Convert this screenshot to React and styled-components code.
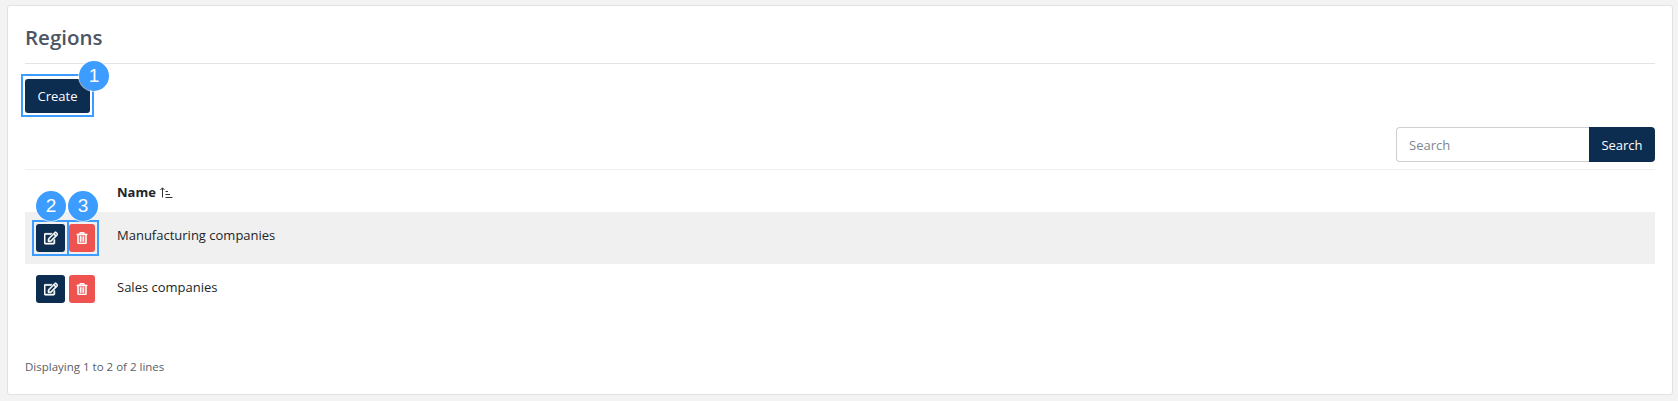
import React from "react";
import styled, { createGlobalStyle } from "styled-components";
import { FaRegEdit, FaRegTrashAlt } from "react-icons/fa";

const rows = [
    { name: "Manufacturing companies", annotated: true },
    { name: "Sales companies", annotated: false },
];

// small sort arrow next to the column name
const SortIcon = () => (
    <svg width="13" height="11" viewBox="0 0 13 11" fill="none" stroke="#333" strokeWidth="1">
        <path d="M2.5 10.5V1M0.5 3L2.5 0.8L4.5 3" />
        <path d="M5.5 4.5H8M5.5 7.5H10M5.5 10.5H12.5" />
    </svg>
);

function App() {
    return (
        <Page>
            <GlobalStyle />
            <Card>
                <Title>Regions</Title>
                <Toolbar>
                    <Annotated>
                        <Button>Create</Button>
                        <Outline $inset="-5px -4px -4px -4px" />
                        <Badge $left="54px" $top="-18px">1</Badge>
                    </Annotated>
                </Toolbar>
                <SearchRow>
                    <SearchInput placeholder="Search" />
                    <SearchButton>Search</SearchButton>
                </SearchRow>
                <Table>
                    <HeaderRow>
                        <NameHeader>
                            Name <SortIcon />
                        </NameHeader>
                    </HeaderRow>
                    {rows.map((row) => (
                        <Row key={row.name} $striped={row.annotated}>
                            <Actions $top={row.annotated ? 12 : 11}>
                                <Annotated>
                                    <EditButton><FaRegEdit size={14} /></EditButton>
                                    {row.annotated && <Outline $inset="-4px -4px -4px -4px" />}
                                    {row.annotated && <Badge $left="0" $top="-33px">2</Badge>}
                                </Annotated>
                                <Annotated>
                                    <DeleteButton><FaRegTrashAlt size={12} /></DeleteButton>
                                    {row.annotated && <Outline $inset="-4px -4px -4px -2px" />}
                                    {row.annotated && <Badge $left="-1px" $top="-33px">3</Badge>}
                                </Annotated>
                            </Actions>
                            <NameCell>{row.name}</NameCell>
                        </Row>
                    ))}
                </Table>
                <Footer>Displaying 1 to 2 of 2 lines</Footer>
            </Card>
        </Page>
    );
}

export default App;

const GlobalStyle = createGlobalStyle`
    html, body {
        margin: 0;
        background: #f3f3f3;
    }
    * {
        box-sizing: border-box;
    }
`;

const Page = styled.div`
    height: 401px;
    padding: 5px 5px 6px 7px;
    font-family: "Open Sans", "Liberation Sans", sans-serif;
`;

const Card = styled.div`
    height: 390px;
    padding: 0 17px;
    background: #fff;
    border: 1px solid #e2e2e2;
    border-radius: 3px;
`;

const Title = styled.h1`
    height: 58px;
    margin: 0;
    padding-top: 17px;
    color: #4b5563;
    font-size: 20.5px;
    font-weight: 600;
    line-height: 28px;
    border-bottom: 1px solid #e3e3e3;
`;

const Toolbar = styled.div`
    display: flex;
    padding-top: 15px;
`;

const Annotated = styled.div`
    position: relative;
    display: flex;
`;

const Outline = styled.div`
    position: absolute;
    inset: ${(p) => p.$inset};
    border: 2px solid #3c9cff;
    pointer-events: none;
`;

const Badge = styled.div`
    position: absolute;
    left: ${(p) => p.$left};
    top: ${(p) => p.$top};
    z-index: 1;
    width: 30px;
    height: 30px;
    display: flex;
    align-items: center;
    justify-content: center;
    color: #fff;
    background: #3c9cff;
    border-radius: 50%;
    box-shadow: 0 0 0 1px rgba(255, 255, 255, 0.6);
    font-family: "Liberation Sans", sans-serif;
    font-size: 19px;
`;

const Button = styled.button`
    width: 65px;
    height: 34px;
    padding: 0;
    color: #fff;
    background: #0c2d4f;
    border: 0;
    border-radius: 3px;
    font-family: inherit;
    font-size: 13px;
`;

const SearchRow = styled.div`
    display: flex;
    justify-content: flex-end;
    margin-top: 14px;
`;

const SearchInput = styled.input`
    width: 193px;
    height: 35px;
    padding: 0 12px;
    color: #333;
    border: 1px solid #cfcfcf;
    border-right: 0;
    border-radius: 4px 0 0 4px;
    outline: none;
    font-family: inherit;
    font-size: 13px;
    &::placeholder {
        color: #7d8791;
    }
`;

const SearchButton = styled.button`
    width: 66px;
    height: 35px;
    padding: 0;
    color: #fff;
    background: #0c2d4f;
    border: 0;
    border-radius: 0 4px 4px 0;
    font-family: inherit;
    font-size: 13px;
`;

const Table = styled.div`
    margin-top: 7px;
    border-top: 1px solid #f0f0f0;
`;

const HeaderRow = styled.div`
    height: 42px;
    padding: 13px 0 0 92px;
`;

const NameHeader = styled.div`
    display: flex;
    align-items: center;
    gap: 4px;
    height: 18px;
    color: #212529;
    font-size: 13px;
    font-weight: 700;
`;

const Row = styled.div`
    display: flex;
    height: 52px;
    padding-left: 11px;
    background: ${(p) => (p.$striped ? "#f0f0f0" : "transparent")};
`;

const Actions = styled.div`
    display: flex;
    gap: 4px;
    width: 81px;
    height: 28px;
    margin-top: ${(p) => p.$top}px;
`;

const EditButton = styled.button`
    width: 29px;
    height: 28px;
    display: flex;
    align-items: center;
    justify-content: center;
    padding: 0;
    color: #fff;
    background: #0c2d4f;
    border: 0;
    border-radius: 3px;
    svg {
        stroke: currentColor;
        stroke-width: 24px;
    }
`;

const DeleteButton = styled(EditButton)`
    width: 26px;
    background: #ef5350;
`;

const NameCell = styled.div`
    margin-top: 14px;
    color: #212529;
    font-size: 13px;
    line-height: 18px;
`;

const Footer = styled.div`
    margin-top: 43px;
    color: #5a6068;
    font-size: 11.5px;
    line-height: 16px;
`;
